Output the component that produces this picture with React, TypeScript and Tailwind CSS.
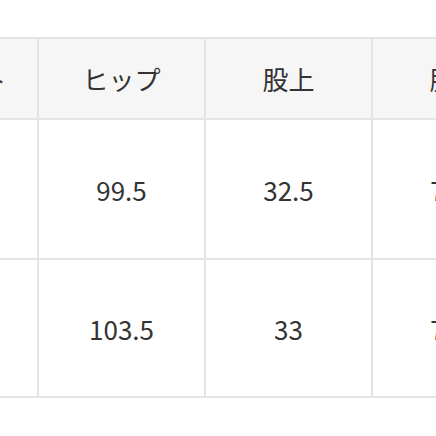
import React from "react";

const headers = ["ウエスト", "ヒップ", "股上", "股下", "裾幅"];
const rows = [
  ["76", "99.5", "32.5", "74.5", "19"],
  ["80", "103.5", "33", "75.5", "20"],
];

export default function App() {
  return (
    <div
      className="w-[436px] h-[436px] overflow-hidden bg-white text-[#333]"
      style={{ fontFamily: '"Noto Sans CJK JP", "Noto Sans", sans-serif' }}
    >
      <div className="mt-[37px] ml-[-130px] inline-grid grid-cols-[repeat(5,165px)] grid-rows-[79px_138px_136px] gap-[2px] p-[2px] bg-[#e4e4e4]">
        {headers.map((h) => (
          <div key={h} className="bg-[#f6f6f6] flex items-center justify-center text-[26px]">
            {h}
          </div>
        ))}
        {rows.map((r, i) =>
          r.map((v, j) => (
            <div key={`${i}-${j}`} className="bg-white flex items-center justify-center text-[26px]">
              {v}
            </div>
          ))
        )}
      </div>
    </div>
  );
}
